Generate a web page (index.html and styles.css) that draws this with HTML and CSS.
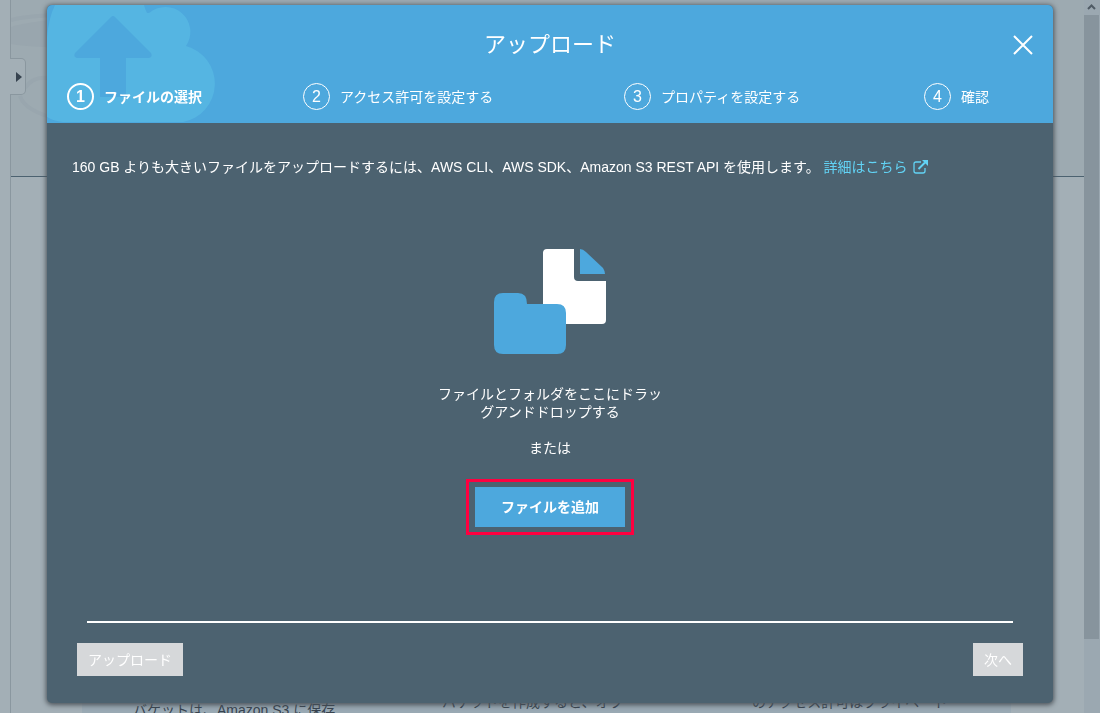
FILE: index.html
```html
<!DOCTYPE html>
<html lang="ja">
<head>
<meta charset="utf-8">
<title>アップロード</title>
<link rel="stylesheet" href="styles.css">
</head>
<body>
<div class="page">
  <div class="gutter"></div>
  <main class="content">
    <header class="hero">
      <svg class="hero-art" width="120" height="130" viewBox="0 0 120 130" fill="none" aria-hidden="true">
        <path d="M0 27Q20 20 90 16V48Q20 48 0 44Z" fill="#99a6ae"/>
        <path d="M0 20C20 15 50 14 90 16M14 88C22 76 34 76 46 80M9 96C12 106 24 114 50 120" stroke="#99a6ae" stroke-width="4"/>
      </svg>
      <button class="drawer" type="button" aria-label="メニューを開く">
        <svg width="6" height="10" viewBox="0 0 6 10" aria-hidden="true"><path d="M0 0L6 5L0 10Z" fill="#37434f"/></svg>
      </button>
    </header>
    <section class="cards">
      <p class="card card-low">バケットは、Amazon S3 に保存</p>
      <p class="card">バケットを作成すると、オブ</p>
      <p class="card">のアクセス許可はプライベート</p>
    </section>
  </main>
  <div class="scrollbar">
    <svg class="scroll-up" width="16" height="15" viewBox="0 0 16 15" fill="none" aria-hidden="true"><path d="M4 9L7.500 5.500L11 9" stroke="#4f5b65" stroke-width="2"/></svg>
    <div class="thumb"></div>
  </div>
</div>

<div class="dialog" role="dialog" aria-labelledby="dialog-title">
  <header class="dialog-head">
    <svg class="cloud" width="170" height="118" viewBox="0 0 170 118" aria-hidden="true">
      <path d="M8 0H97Q98 4 100 8H102A25 25 0 0 1 139 41A39 39 0 0 1 136 117H16Q6 116 0 112V32Q2 12 8 0Z" fill="#55b5e2"/>
      <path d="M64 12Q66 10 68 12L104 48Q106 52 102 53H79V92H53V53H30Q26 52 28 48Z" fill="#4da8dd"/>
    </svg>
    <div class="title-row">
      <h1 class="title" id="dialog-title">アップロード</h1>
      <button class="close" type="button" aria-label="閉じる">
        <svg width="20" height="20" viewBox="0 0 20 20" fill="none" aria-hidden="true"><path d="M1 1L19 19M19 1L1 19" stroke="#fff" stroke-width="2"/></svg>
      </button>
    </div>
    <ol class="steps">
      <li class="step step-current" aria-current="step"><span class="num">1</span>ファイルの選択</li>
      <li class="step"><span class="num">2</span>アクセス許可を設定する</li>
      <li class="step"><span class="num">3</span>プロパティを設定する</li>
      <li class="step"><span class="num">4</span>確認</li>
    </ol>
  </header>
  <div class="dialog-body">
    <p class="notice">160 GB よりも大きいファイルをアップロードするには、AWS CLI、AWS SDK、Amazon S3 REST API を使用します。
      <a class="more" href="#">詳細はこちら<svg class="external" width="16" height="14" viewBox="0 0 16 14" fill="none" aria-hidden="true"><path d="M8 2H3Q1 2 1 4V11Q1 13 3 13H10Q12 13 12 11V8" stroke="#62d3f5" stroke-width="1.300"/><path d="M5.500 9L12 2.500" stroke="#62d3f5" stroke-width="2"/><path d="M9 0H15V6Z" fill="#62d3f5"/></svg></a>
    </p>
    <div class="dropzone">
      <svg class="art" width="112" height="105" viewBox="0 0 112 105" aria-hidden="true">
        <path d="M53 0H80V28Q80 32 84 32H112V71Q112 75 108 75H53Q49 75 49 71V4Q49 0 53 0Z" fill="#fff"/>
        <path d="M86 0Q89 0 92 3L109 19Q111 22 111 25H86Z" fill="#4da8dd"/>
        <path d="M9 44H24Q33 44 33 55H63Q72 55 72 64V96Q72 105 63 105H9Q0 105 0 96V53Q0 44 9 44Z" fill="#4da8dd"/>
      </svg>
      <p class="hint">ファイルとフォルダをここにドラッグアンドドロップする</p>
      <p class="hint">または</p>
      <div class="highlight"><button class="add" type="button">ファイルを追加</button></div>
    </div>
    <footer class="dialog-foot">
      <hr class="rule">
      <div class="actions">
        <button class="action" type="button" disabled>アップロード</button>
        <button class="action" type="button" disabled>次へ</button>
      </div>
    </footer>
  </div>
</div>
</body>
</html>
```

FILE: styles.css
```css
* { box-sizing: border-box; }

body,
button {
  font-family: "Liberation Sans", "Noto Sans CJK JP", sans-serif;
  font-size: 14px;
}

body {
  margin: 0;
  color: #37434f;
  overflow: hidden;
}

h1, p, ol { margin: 0; padding: 0; }

button { border: 0; border-radius: 0; padding: 0; }

/* page behind the dialog */
.page {
  display: flex;
  height: 100vh;
  background: #a3afb6;
}

.gutter {
  width: 11px;
  border-right: 1px solid #8a979f;
}

.content {
  display: flex;
  flex: 1;
  flex-direction: column;
  justify-content: space-between;
}

.hero {
  position: relative;
  height: 177px;
  border-bottom: 1px solid #4c6270;
  background: #9daab1;
}

.hero-art { display: block; }

.drawer {
  position: absolute;
  top: 58px;
  left: -1px;
  display: flex;
  align-items: center;
  justify-content: center;
  width: 16px;
  height: 37px;
  padding-left: 3px;
  border: 1px solid #8a979f;
  border-left: 0;
  border-radius: 0 5px 5px 0;
  background: #a3afb6;
}

.cards {
  display: grid;
  grid-template-columns: 309fr 310fr 259fr;
  margin: 0 73px 0 71px;
  padding-left: 51px;
  height: 22px;
  background: #99a9b3;
}

.card { line-height: 22px; white-space: nowrap; }

.card-low { padding-top: 8px; }

.scrollbar {
  display: flex;
  flex-direction: column;
  width: 16px;
  background: #9ba8b1;
}

.scroll-up { display: block; }

.thumb {
  height: 90%;
  max-height: 624px;
  margin-right: 1px;
  background: #87949d;
}

/* dialog */
.dialog {
  position: fixed;
  inset: 5px 47px 10px;
  display: flex;
  flex-direction: column;
  border-radius: 5px;
  overflow: hidden;
  background: #4c6270;
  box-shadow: 0 1px 5px 1px #4b5259;
  color: #fff;
}

.dialog-head {
  position: relative;
  height: 118px;
  background: #4da8dd;
}

.cloud { position: absolute; top: 0; left: 0; }

.title-row {
  position: relative;
  display: grid;
  grid-template-columns: 20px 1fr 20px;
  align-items: center;
  padding: 22px 20px 0;
}

.title {
  grid-column: 2;
  font-size: 22px;
  font-weight: 400;
  line-height: 36px;
  text-align: center;
}

.close { display: flex; background: none; }

.steps {
  position: relative;
  display: grid;
  grid-template-columns: 236fr 321fr 300fr auto;
  padding: 20px 64px 0 20px;
  list-style: none;
}

.step {
  display: flex;
  align-items: center;
  gap: 10px;
  line-height: 20px;
}

.step-current { font-weight: 700; }

.num {
  display: flex;
  align-items: center;
  justify-content: center;
  width: 27px;
  height: 27px;
  border: 1px solid #fff;
  border-radius: 50%;
  font-size: 16px;
}

.step-current .num { border-width: 2px; }

.dialog-body {
  display: flex;
  flex: 1;
  flex-direction: column;
  padding: 34px 25px 27px;
}

.notice { line-height: 20px; }

.more { color: #62d3f5; text-decoration: none; }

.external { margin-left: 5px; vertical-align: -2px; }

.dropzone {
  display: flex;
  flex: 1;
  flex-direction: column;
  align-items: center;
  padding-top: 72px;
}

.art { margin-bottom: 31px; }

.hint {
  width: 226px;
  margin-bottom: 18px;
  line-height: 18px;
  text-align: center;
}

.highlight {
  margin-top: 4px;
  padding: 5px 6px;
  border: 3px solid #ff0040;
}

.add {
  display: block;
  width: 150px;
  height: 40px;
  padding-bottom: 2px;
  background: #4da8dd;
  color: #fff;
  font-weight: 700;
}

.dialog-foot { padding: 0 5px; }

.rule {
  height: 2px;
  margin: 0 10px 20px;
  border: 0;
  background: #fff;
}

.actions { display: flex; justify-content: space-between; }

.action {
  height: 33px;
  padding: 0 11px 2px;
  background: #d6d8da;
  color: #fff;
}
```
